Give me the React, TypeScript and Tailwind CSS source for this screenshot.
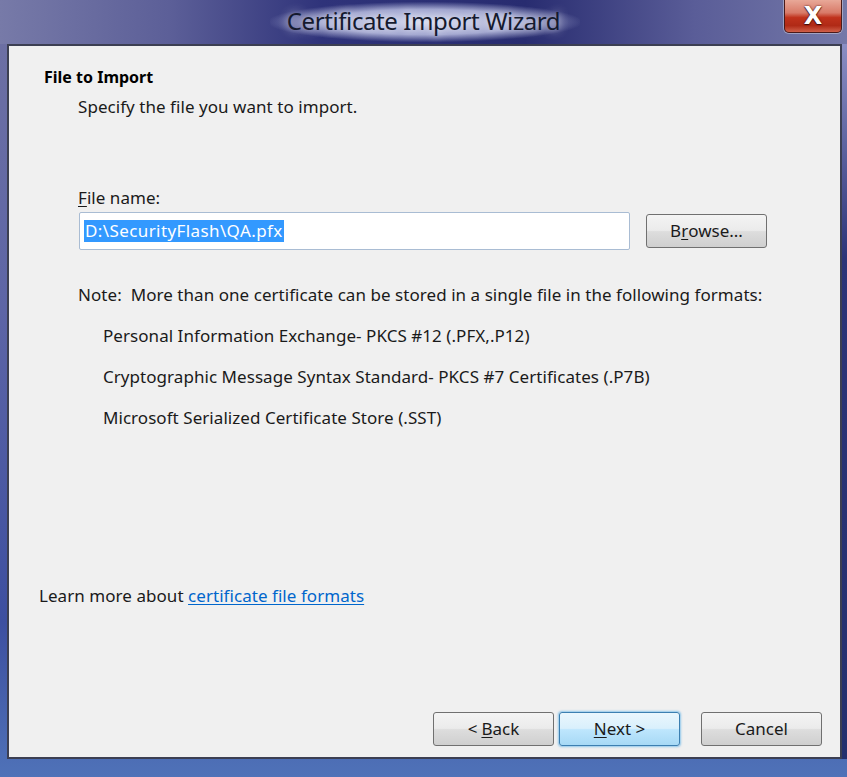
export default function App() {
  const formats = [
    "Personal Information Exchange- PKCS #12 (.PFX,.P12)",
    "Cryptographic Message Syntax Standard- PKCS #7 Certificates (.P7B)",
    "Microsoft Serialized Certificate Store (.SST)",
  ];

  const btn =
    "h-[34px] w-[121px] rounded-[3px] border border-[#707070] bg-[linear-gradient(#f4f4f4,#ebebeb_48%,#dddddd_52%,#cfcfcf)] text-[17px] text-[#1a1a1a] flex items-center justify-center";

  const body = "text-[17px] tracking-[0.05px] text-[#1a1a1a] leading-[22px]";

  return (
    <div
      className="w-[847px] h-[777px] flex flex-col bg-[linear-gradient(#6f71a3_0%,#5d65a6_40%,#3d4fa0_80%,#4f72b8_100%)] overflow-hidden"
      style={{ fontFamily: '"Noto Sans", "DejaVu Sans", sans-serif' }}
    >
      {/* Title bar */}
      <div className="relative h-[44px] shrink-0 flex items-center justify-center bg-[linear-gradient(90deg,#777aa8_0%,#5c5f98_20%,#2f337a_38%,#282c70_62%,#5a5d98_82%,#7478a8_100%)]">
        <div className="absolute left-[270px] top-[2px] h-[40px] w-[310px] rounded-full bg-[radial-gradient(ellipse_at_center,rgba(214,218,240,0.95)_0%,rgba(190,195,230,0.8)_45%,rgba(90,96,160,0)_72%)]" />
        <span className="relative mt-[-2px] text-[24px] tracking-[-0.4px] text-[#151a2e] [text-shadow:0_0_10px_rgba(255,255,255,0.9)]">
          Certificate Import Wizard
        </span>
        {/* Close button */}
        <div className="absolute right-[5px] top-0 h-[33px] w-[58px] rounded-b-[5px] border border-t-0 border-[#4a1a1a] bg-[linear-gradient(#e8a898_0%,#d87a68_40%,#c0321c_55%,#b02a16_80%,#d0604a_100%)] flex items-center justify-center shadow-[0_0_0_1px_rgba(255,255,255,0.35)]">
          <span className="text-[24px] font-bold leading-none text-white [text-shadow:0_0_2px_#3a0a0a,0_1px_1px_#3a0a0a]" style={{ fontFamily: '"DejaVu Sans", sans-serif' }}>
            X
          </span>
        </div>
      </div>

      {/* Content panel */}
      <div className="flex-1 flex mb-[18px]">
        <div className="ml-[7px] flex-1 border-2 border-[#3c3f52] bg-[#f0f0f0] flex flex-col">
          <div className="pl-[35px] pt-[21px] text-[16px] font-bold text-black leading-[20px]">File to Import</div>
          <div className={"pl-[69px] pt-[9px] " + body}>Specify the file you want to import.</div>

          <div className={"pl-[69px] pt-[69px] " + body}>
            <span className="underline underline-offset-2">F</span>ile name:
          </div>
          <div className="pl-[70px] pt-[3px] flex items-center">
            <div className="h-[38px] w-[551px] rounded-[2px] border border-[#a9bcd3] bg-white flex items-center pl-[4px]">
              <span className="bg-[#3399ff] text-white text-[17px] tracking-[0.4px] leading-[22px] px-[1px]">D:\SecurityFlash\QA.pfx</span>
            </div>
            <button className={btn + " ml-[16px]"}>
              B<span className="underline underline-offset-2">r</span>owse...
            </button>
          </div>

          <div className={"pl-[69px] pt-[34px] " + body}>
            Note:&nbsp; More than one certificate can be stored in a single file in the following formats:
          </div>
          <div className="pl-[94px] flex flex-col gap-[19px] pt-[19px]">
            {formats.map((f) => (
              <div key={f} className={body}>
                {f}
              </div>
            ))}
          </div>

          <div className="flex-1" />

          <div className={"pl-[30px] " + body}>
            Learn more about{" "}
            <span className="text-[#0066cc] underline underline-offset-2">certificate file formats</span>
          </div>

          <div className="pt-[105px] pb-[11px] pr-[18px] flex justify-end items-center">
            <button className={btn}>
              &lt; <span className="underline underline-offset-2 ml-[4px]">B</span>ack
            </button>
            <button className="ml-[5px] h-[34px] w-[121px] rounded-[3px] border border-[#3c7fb1] bg-[linear-gradient(#eaf6fd,#d9f0fc_48%,#bee6fd_52%,#a7d9f5)] shadow-[0_0_2px_1px_rgba(80,170,230,0.6)] text-[17px] text-[#1a1a1a] flex items-center justify-center">
              <span className="underline underline-offset-2">N</span>ext &gt;
            </button>
            <button className={btn + " ml-[21px]"}>Cancel</button>
          </div>
        </div>
        <div className="w-[5px] bg-[linear-gradient(#8a8ec4,#2c3478_30%,#24306e_100%)]" />
      </div>
    </div>
  );
}
